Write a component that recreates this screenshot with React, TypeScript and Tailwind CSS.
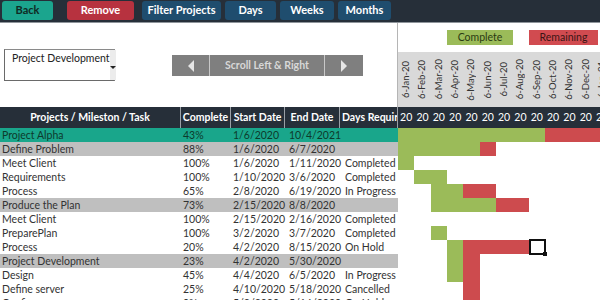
type Row = {
  name: string;
  pct: string;
  start: string;
  end: string;
  status: string;
  kind: "project" | "milestone" | "task";
  green: number[];
  red: number[];
  selected?: number;
};

const rows: Row[] = [
  { name: "Project Alpha", pct: "43%", start: "1/6/2020", end: "10/4/2021", status: "", kind: "project", green: [0, 1, 2, 3, 4, 5, 6, 7, 8], red: [9, 10, 11, 12] },
  { name: "Define Problem", pct: "88%", start: "1/6/2020", end: "6/7/2020", status: "", kind: "milestone", green: [0, 1, 2, 3, 4], red: [5] },
  { name: "Meet Client", pct: "100%", start: "1/6/2020", end: "1/11/2020", status: "Completed", kind: "task", green: [0], red: [] },
  { name: "Requirements", pct: "100%", start: "1/10/2020", end: "3/6/2020", status: "Completed", kind: "task", green: [1, 2], red: [] },
  { name: "Process", pct: "65%", start: "2/8/2020", end: "6/19/2020", status: "In Progress", kind: "task", green: [2, 3], red: [4, 5] },
  { name: "Produce the Plan", pct: "73%", start: "2/15/2020", end: "8/8/2020", status: "", kind: "milestone", green: [2, 3, 4, 5], red: [6, 7] },
  { name: "Meet Client", pct: "100%", start: "2/15/2020", end: "2/16/2020", status: "Completed", kind: "task", green: [], red: [] },
  { name: "PreparePlan", pct: "100%", start: "3/2/2020", end: "3/7/2020", status: "Completed", kind: "task", green: [2], red: [] },
  { name: "Process", pct: "20%", start: "4/2/2020", end: "8/15/2020", status: "On Hold", kind: "task", green: [3], red: [4, 5, 6, 7], selected: 8 },
  { name: "Project Development", pct: "23%", start: "4/2/2020", end: "5/30/2020", status: "", kind: "milestone", green: [3], red: [4] },
  { name: "Design", pct: "45%", start: "4/4/2020", end: "6/5/2020", status: "In Progress", kind: "task", green: [3], red: [4] },
  { name: "Define server", pct: "25%", start: "4/10/2020", end: "5/18/2020", status: "Cancelled", kind: "task", green: [], red: [4] },
  { name: "Configure server", pct: "0%", start: "5/2/2020", end: "5/16/2020", status: "On Hold", kind: "task", green: [], red: [4] },
];

const months = ["Jan", "Feb", "Mar", "Apr", "May", "Jun", "Jul", "Aug", "Sep", "Oct", "Nov", "Dec", "Jan"];
const cols = Array.from({ length: 13 }, (_, i) => i);

const TopButton = ({ label, className }: { label: string; className: string }) => (
  <div className={`h-[19px] rounded-[3px] flex items-center justify-center text-[11px] font-bold ${className}`}>
    {label}
  </div>
);

const GanttCell = ({ row, col }: { row: Row; col: number }) => {
  let bg = "bg-white";
  if (row.green.includes(col)) bg = "bg-[#9bbb59]";
  if (row.red.includes(col)) bg = "bg-[#cd4b4e]";
  return (
    <div className={`relative w-[16.33px] h-full shrink-0 ${bg}`}>
      {row.selected === col && (
        <div className="absolute left-0 -top-[1px] w-[17px] h-[16px] border-2 border-[#111] bg-white z-10">
          <div className="absolute -right-[3px] -bottom-[3px] w-[4px] h-[4px] bg-[#111]" />
        </div>
      )}
    </div>
  );
};

const App = () => {
  return (
    <div className="w-[600px] h-[300px] overflow-hidden bg-white font-['Lato','Liberation_Sans',sans-serif] text-[#333]">
      {/* toolbar */}
      <div className="h-[23px] bg-[#262f39] border-b border-[#8f959b] flex items-start pt-[1px] pl-[2px]">
        <TopButton label="Back" className="w-[51px] bg-[#1ba58e] text-[#0f2a24]" />
        <TopButton label="Remove" className="w-[67px] ml-[14px] bg-[#b7323f] text-white" />
        <TopButton label="Filter Projects" className="w-[79px] ml-[8px] bg-[#1f4d6e] text-white" />
        <TopButton label="Days" className="w-[51px] ml-[4px] bg-[#1f4d6e] text-white" />
        <TopButton label="Weeks" className="w-[54px] ml-[4px] bg-[#1f4d6e] text-white" />
        <TopButton label="Months" className="w-[53px] ml-[4px] bg-[#1f4d6e] text-white" />
      </div>

      {/* controls + timeline head */}
      <div className="flex h-[84px]">
        <div className="w-[398px] shrink-0 border-r border-[#b5b5b5] flex items-start">
          <div className="ml-[4px] mt-[26px] w-[111px] h-[32px] flex border border-[#8a8a8a] border-l-[#6a6a6a] border-b-[#6a6a6a] bg-white">
            <div className="flex-1 pl-[7px] pt-[1px] text-[10.5px] text-[#222] leading-[14px] whitespace-nowrap">Project Development</div>
            <div className="w-[11px] bg-[#ececec] flex items-center justify-center">
              <div className="w-0 h-0 border-l-[3px] border-r-[3px] border-t-[3px] border-l-transparent border-r-transparent border-t-[#222] mt-[4px]" />
            </div>
          </div>
          <div className="ml-[57px] mt-[32px] h-[21px] flex bg-[#c8c8c8] gap-[1px]">
            <div className="w-[37px] bg-[#7f7f7f] flex items-center justify-center">
              <div className="w-0 h-0 border-t-[6px] border-b-[6px] border-r-[6px] border-t-transparent border-b-transparent border-r-[#e6e6e6]" />
            </div>
            <div className="w-[114px] bg-[#7f7f7f] flex items-center justify-center text-[10.5px] font-bold text-[#d8d8d8]">
              Scroll Left &amp; Right
            </div>
            <div className="w-[38px] bg-[#7f7f7f] flex items-center justify-center">
              <div className="w-0 h-0 border-t-[6px] border-b-[6px] border-l-[6px] border-t-transparent border-b-transparent border-l-[#e6e6e6]" />
            </div>
          </div>
        </div>
        <div className="flex-1 flex flex-col">
          <div className="h-[29px] flex items-start pt-[7px]">
            <div className="ml-[49px] w-[66px] h-[15px] bg-[#9bbb59] flex items-center justify-center text-[10.5px] text-[#2a3a12]">Complete</div>
            <div className="ml-[16px] w-[69px] h-[15px] bg-[#d14b50] flex items-center justify-center text-[10.5px] text-[#3a1515]">Remaining</div>
          </div>
          <div className="flex-1 bg-[#d9d9d9] flex overflow-hidden">
            {cols.map((c) => (
              <div key={c} className="w-[16.33px] shrink-0 flex items-center justify-center">
                <span className="[writing-mode:vertical-rl] rotate-180 text-[9.5px] leading-[10px] text-[#333] whitespace-nowrap">
                  {`6-${months[c]}-${c === 12 ? "21" : "20"}`}
                </span>
              </div>
            ))}
          </div>
        </div>
      </div>

      {/* table header */}
      <div className="h-[21px] bg-[#262f39] flex text-white text-[10.5px] font-bold">
        <div className="w-[181px] shrink-0 flex items-center justify-center border-r border-[#9aa0a6]">Projects / Mileston / Task</div>
        <div className="w-[50px] shrink-0 flex items-center justify-center border-r border-[#9aa0a6]">Complete</div>
        <div className="w-[54px] shrink-0 flex items-center justify-center border-r border-[#9aa0a6]">Start Date</div>
        <div className="w-[55px] shrink-0 flex items-center justify-center border-r border-[#9aa0a6]">End Date</div>
        <div className="w-[58px] shrink-0 flex items-center pl-[2px] overflow-hidden whitespace-nowrap border-r border-[#9aa0a6]">Days Required</div>
        <div className="flex font-normal">
          {cols.map((c) => (
            <div key={c} className="w-[16.33px] shrink-0 flex items-center justify-center text-[10.5px]">20</div>
          ))}
        </div>
      </div>

      {/* rows */}
      {rows.map((r, i) => {
        const rowBg =
          r.kind === "project" ? "bg-[#19a68b] text-[#0d3a2c]" : r.kind === "milestone" ? "bg-[#bfbfbf] text-[#333]" : "bg-white text-[#333]";
        return (
          <div key={i} className="h-[14px] flex text-[10.5px] leading-[14px]">
            <div className={`w-[398px] shrink-0 flex ${rowBg}`}>
              <div className="w-[181px] shrink-0 pl-[2px] whitespace-nowrap">{r.name}</div>
              <div className="w-[51px] shrink-0 pl-[2px]">{r.pct}</div>
              <div className="w-[55px] shrink-0 pl-[1px] whitespace-nowrap">{r.start}</div>
              <div className="w-[55px] shrink-0 pl-[2px] whitespace-nowrap">{r.end}</div>
              <div className="flex-1 pl-[3px] whitespace-nowrap overflow-hidden">{r.status}</div>
            </div>
            <div className="flex">
              {cols.map((c) => (
                <GanttCell key={c} row={r} col={c} />
              ))}
            </div>
          </div>
        );
      })}
    </div>
  );
};

export default App;
